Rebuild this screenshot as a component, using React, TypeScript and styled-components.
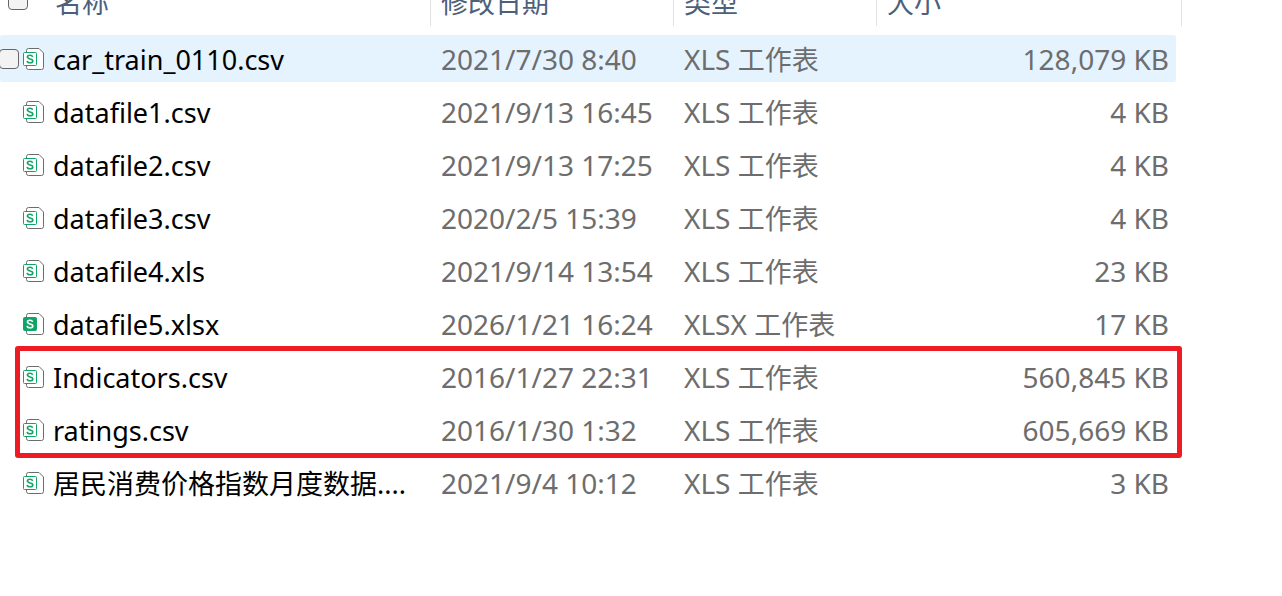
import React from 'react';
import styled, { createGlobalStyle } from 'styled-components';

const GlobalStyle = createGlobalStyle`
  body {
    margin: 0;
    background: #ffffff;
    overflow-x: hidden;
    font-family: "Noto Sans", "Noto Sans CJK SC", sans-serif;
    font-size: 28px;
  }
`;

const FileTable = styled.table`
  display: block;
  margin-right: 100px;
`;

const columns = '431px 243px 203px minmax(200px, 1fr)';

const Head = styled.thead`
  display: block;
  margin-bottom: 9px;
`;

const HeadRow = styled.tr`
  display: grid;
  grid-template-columns: ${columns};
  grid-template-rows: 26px;
`;

const HeadCell = styled.th`
  display: flex;
  align-items: flex-end;
  gap: 27px;
  box-sizing: border-box;
  height: 26px;
  padding: 0 0 10px 10px;
  border-right: 1px solid #e2e2e2;
  color: #4c607a;
  font-size: 27px;
  font-weight: 400;
  line-height: 28px;

  &:first-child {
    padding-left: 8px;
  }
`;

const Check = styled.input`
  appearance: none;
  box-sizing: border-box;
  flex: none;
  width: 20px;
  height: 20px;
  margin: 0;
  border: 1px solid #666666;
  border-radius: 4px;
  background: #f3f3f3;
`;

const HeadCheck = styled(Check)`
  margin-bottom: 6px;
`;

const Group = styled.tbody<{ $marked?: boolean }>`
  position: relative;
  display: grid;
  gap: 6px;
  margin: 0 6px 6px 0;

  &::after {
    content: ${(p) => (p.$marked ? '""' : 'none')};
    position: absolute;
    inset: -7px -6px -5px 15px;
    border: 5px solid #ed1c24;
    border-radius: 3px;
    pointer-events: none;
  }
`;

const Row = styled.tr<{ $hovered?: boolean }>`
  display: grid;
  grid-template-columns: ${columns};
  border-radius: 2px;
  background: ${(p) => (p.$hovered ? '#e5f3ff' : 'transparent')};

  ${Check} {
    visibility: ${(p) => (p.$hovered ? 'visible' : 'hidden')};
    margin-left: -1px;
  }
`;

const Cell = styled.td`
  height: 47px;
  padding: 0 0 0 10px;
  color: #6d6d6d;
  line-height: 48px;
  white-space: nowrap;
`;

const NameCell = styled(Cell)`
  display: flex;
  align-items: center;
  padding: 0;
  color: #000000;
  font-size: 27px;
`;

const FileName = styled.span`
  padding-top: 2px;
`;

const SizeCell = styled(Cell)`
  padding: 0 7px 0 0;
  text-align: right;
`;

const Han = styled.span`
  font-family: "Noto Sans CJK SC", sans-serif;
  font-size: 27px;
`;

const Icon = styled.svg`
  flex: none;
  width: 22px;
  height: 23px;
  margin: 0 8px 0 4px;
`;

function SheetIcon({ solid }: { solid?: boolean }) {
  return (
    <Icon viewBox="0 0 22 23" aria-hidden="true">
      <path
        d="M3.5 5V3.5Q3.5 1.5 5.5 1.5H16L20.5 6V20.5Q20.5 22.5 18.5 22.5H5.5Q3.5 22.5 3.5 20.5V19"
        fill="#ffffff"
        stroke="#6c6c6c"
      />
      <rect
        x="0.5" y="5.5" width="13" height="13" rx="1"
        fill={solid ? '#10a566' : '#ffffff'}
        stroke="#10a566"
      />
      <path
        d="M9.6 9.9C9.3 8.8 8.4 8.3 7 8.3C5.4 8.3 4.4 9 4.4 10.1C4.4 12.6 9.8 11.2 9.8 13.9C9.8 15.1 8.7 15.8 7 15.8C5.3 15.8 4.3 15.1 4.1 13.9"
        fill="none"
        stroke={solid ? '#ffffff' : '#10a566'}
        strokeWidth="1.6"
      />
    </Icon>
  );
}

interface FileEntry {
  name: string;
  han?: string;
  date: string;
  kind: string;
  size: string;
}

interface FileGroup {
  marked?: boolean;
  files: FileEntry[];
}

const groups: FileGroup[] = [
  {
    files: [
      { name: 'car_train_0110.csv', date: '2021/7/30 8:40', kind: 'XLS', size: '128,079 KB' },
      { name: 'datafile1.csv', date: '2021/9/13 16:45', kind: 'XLS', size: '4 KB' },
      { name: 'datafile2.csv', date: '2021/9/13 17:25', kind: 'XLS', size: '4 KB' },
      { name: 'datafile3.csv', date: '2020/2/5 15:39', kind: 'XLS', size: '4 KB' },
      { name: 'datafile4.xls', date: '2021/9/14 13:54', kind: 'XLS', size: '23 KB' },
      { name: 'datafile5.xlsx', date: '2026/1/21 16:24', kind: 'XLSX', size: '17 KB' },
    ],
  },
  {
    marked: true,
    files: [
      { name: 'Indicators.csv', date: '2016/1/27 22:31', kind: 'XLS', size: '560,845 KB' },
      { name: 'ratings.csv', date: '2016/1/30 1:32', kind: 'XLS', size: '605,669 KB' },
    ],
  },
  {
    files: [
      { han: '居民消费价格指数月度数据', name: '....', date: '2021/9/4 10:12', kind: 'XLS', size: '3 KB' },
    ],
  },
];

function FileRow({ file, hovered }: { file: FileEntry; hovered: boolean }) {
  return (
    <Row $hovered={hovered}>
      <NameCell>
        <Check type="checkbox" aria-label={(file.han ?? '') + file.name} />
        <SheetIcon solid={file.kind === 'XLSX'} />
        <FileName>
          {file.han && <Han>{file.han}</Han>}
          {file.name}
        </FileName>
      </NameCell>
      <Cell>{file.date}</Cell>
      <Cell>
        {file.kind} <Han>工作表</Han>
      </Cell>
      <SizeCell>{file.size}</SizeCell>
    </Row>
  );
}

export default function App() {
  return (
    <>
      <GlobalStyle />
      <FileTable lang="zh-CN">
        <Head>
          <HeadRow>
            <HeadCell scope="col">
              <HeadCheck type="checkbox" aria-label="全选" />
              <Han>名称</Han>
            </HeadCell>
            <HeadCell scope="col"><Han>修改日期</Han></HeadCell>
            <HeadCell scope="col"><Han>类型</Han></HeadCell>
            <HeadCell scope="col"><Han>大小</Han></HeadCell>
          </HeadRow>
        </Head>
        {groups.map((group, g) => (
          <Group key={g} $marked={group.marked}>
            {group.files.map((file, i) => (
              <FileRow key={file.date} file={file} hovered={g === 0 && i === 0} />
            ))}
          </Group>
        ))}
      </FileTable>
    </>
  );
}
